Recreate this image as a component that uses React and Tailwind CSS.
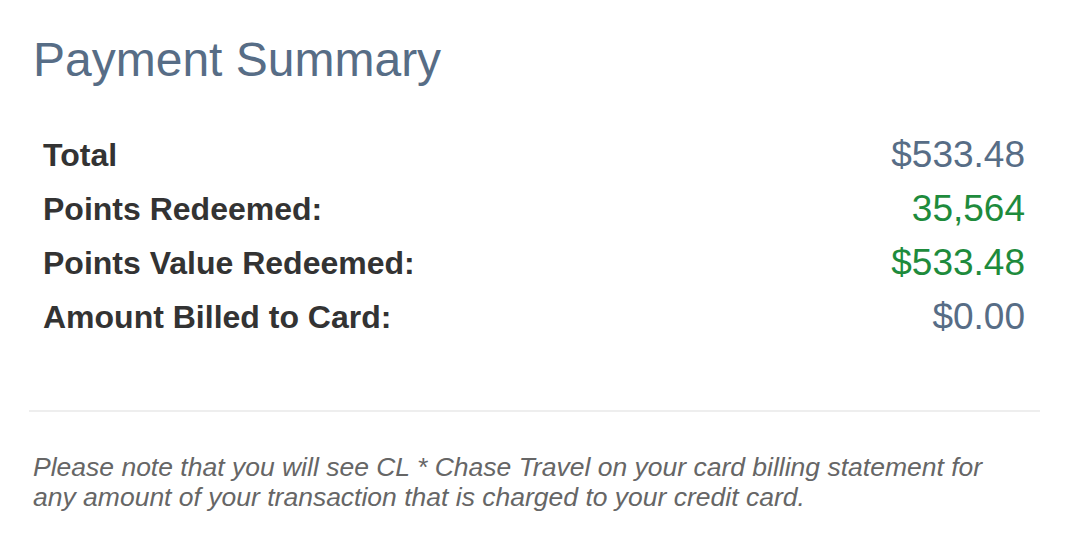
import React from "react";

const rows = [
  { label: "Total", value: "$533.48", color: "text-[#576d86]" },
  { label: "Points Redeemed:", value: "35,564", color: "text-[#1e8b3c]" },
  { label: "Points Value Redeemed:", value: "$533.48", color: "text-[#1e8b3c]" },
  { label: "Amount Billed to Card:", value: "$0.00", color: "text-[#576d86]" },
];

const App = () => {
  return (
    <div className="min-h-screen bg-white font-['Liberation_Sans',Arial,sans-serif]">
      <div className="pl-[29px] pr-[37px] pt-[30px]">
        {/* Title */}
        <h1 className="pl-[4px] text-[48px] leading-[60px] text-[#576d86]">
          Payment Summary
        </h1>

        {/* Summary rows */}
        <div className="mt-[38px] pl-[14px] pr-[15px]">
          {rows.map((row) => (
            <div
              key={row.label}
              className="flex items-center justify-between h-[54px]"
            >
              <span className="text-[32px] font-bold text-[#333333]">
                {row.label}
              </span>
              <span className={`text-[37px] ${row.color}`}>{row.value}</span>
            </div>
          ))}
        </div>

        {/* Divider */}
        <div className="mt-[66px] border-t-2 border-[#eeeeee]" />

        {/* Note */}
        <p className="mt-[40px] pl-[4px] max-w-[1000px] text-[26.5px] leading-[30px] italic text-[#666666]">
          Please note that you will see CL * Chase Travel on your card billing
          statement for any amount of your transaction that is charged to your
          credit card.
        </p>
      </div>
    </div>
  );
};

export default App;
